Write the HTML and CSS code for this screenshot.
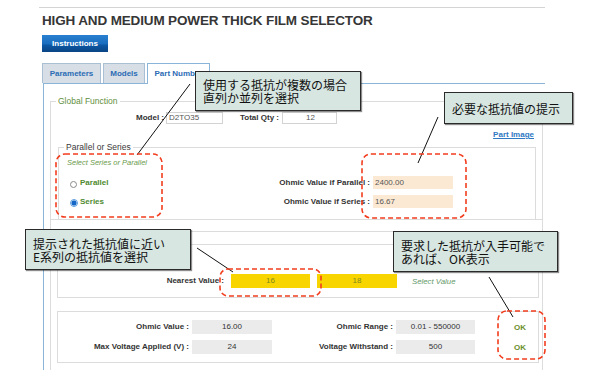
FILE: index.html
```html
<!DOCTYPE html>
<html lang="ja">
<head>
  <meta charset="UTF-8" />
  <meta name="viewport" content="width=device-width, initial-scale=1.0"/>
  <title>High and Medium Power Thick Film Selector</title>
  <link rel="stylesheet" href="styles.css">
</head>
<body>
  <div class="top-rule"></div>
  <h1 class="title">HIGH AND MEDIUM POWER THICK FILM SELECTOR</h1>
  <div class="btn-instr">Instructions</div>

  <div class="tabs">
    <div class="tab tab-params">Parameters</div>
    <div class="tab tab-models">Models</div>
    <div class="tab tab-part active">Part Number</div>
  </div>

  <div class="panel">
    <div class="form-wrap">
      <fieldset class="fs-global">
        <legend>Global Function</legend>
        <div class="row-model">
          <span class="lbl lbl-model">Model :</span>
          <div class="inp inp-model">D2TO35</div>
          <span class="lbl lbl-qty">Total Qty :</span>
          <div class="inp inp-qty">12</div>
        </div>
        <div class="row-link"><a class="part-link">Part Image</a></div>

        <fieldset class="fs-ps">
          <legend>Parallel or Series</legend>
          <div class="hint">Select Series or Parallel</div>
          <div class="ps-rows">
            <div class="ps-row">
              <div class="ps-choice"><span class="radio"></span><span class="choice-lbl">Parallel</span></div>
              <span class="lbl ps-lbl">Ohmic Value if Parallel :</span>
              <div class="val-peach">2400.00</div>
            </div>
            <div class="ps-row">
              <div class="ps-choice"><span class="radio on"></span><span class="choice-lbl">Series</span></div>
              <span class="lbl ps-lbl">Ohmic Value if Series :</span>
              <div class="val-peach">16.67</div>
            </div>
          </div>
        </fieldset>
      </fieldset>

      <div class="fs-result">
        <div class="box box-nearest">
          <span class="lbl nearest-lbl">Nearest Value :</span>
          <span class="pick">16</span>
          <span class="pick pick2">18</span>
          <span class="select-hint">Select Value</span>
        </div>
        <div class="box box-spec">
          <span class="lbl">Ohmic Value :</span>
          <span class="val-gray">16.00</span>
          <span class="lbl">Ohmic Range :</span>
          <span class="val-gray">0.01 - 550000</span>
          <span class="ok">OK</span>

          <span class="lbl">Max Voltage Applied (V) :</span>
          <span class="val-gray">24</span>
          <span class="lbl">Voltage Withstand :</span>
          <span class="val-gray">500</span>
          <span class="ok">OK</span>
        </div>
      </div>
    </div>
  </div>

  <!-- annotation layer -->
  <svg class="marks" width="600" height="370" viewBox="0 0 600 370">
    <g class="leaders">
      <line x1="190" y1="84" x2="137" y2="155"/>
      <line x1="438" y1="117" x2="418" y2="163"/>
      <line x1="197" y1="248" x2="233" y2="272"/>
      <line x1="489" y1="277" x2="513" y2="317"/>
    </g>
    <g class="zones">
      <rect x="56" y="154" width="106" height="63" rx="9"/>
      <rect x="362" y="154" width="104" height="64" rx="9"/>
      <rect x="220" y="269" width="101" height="27" rx="8"/>
      <rect x="498" y="311" width="47" height="48" rx="9"/>
    </g>
  </svg>

  <div class="callout c1">使用する抵抗が複数の場合<br>直列か並列を選択</div>
  <div class="callout c2">必要な抵抗値の提示</div>
  <div class="callout c3">提示された抵抗値に近い<br>E系列の抵抗値を選択</div>
  <div class="callout c4">要求した抵抗が入手可能で<br>あれば、OK表示</div>
</body>
</html>
```

FILE: styles.css
```css
* {
  box-sizing: border-box;
}

html, body {
  margin: 0;
  padding: 0;
  overflow: hidden;
  background: #fff;
}

body {
  position: relative;
  width: 600px;
  height: 370px;
  font-family: "Liberation Sans", Arial, sans-serif;
  color: #333;
}

.top-rule {
  margin: 7px 0 0 39px;
  width: 506px;
  height: 1px;
  background: #d4d4d4;
}

.title {
  margin: 5px 0 0 42px;
  font-size: 13.5px;
  line-height: 16px;
  font-weight: bold;
  letter-spacing: -0.15px;
  color: #363636;
}

.btn-instr {
  margin: 6px 0 0 42px;
  width: 66px;
  height: 17px;
  background: linear-gradient(to bottom, #2a80d0 0%, #1a6ebf 50%, #0c56a2 62%, #0a4584 100%);
  color: #fff;
  font-size: 8px;
  font-weight: bold;
  line-height: 17px;
  text-align: center;
}

/* tabs */
.tabs {
  display: flex;
  align-items: flex-start;
  gap: 2px;
  margin: 11px 0 0 42px;
  height: 20px;
}

.tab {
  height: 20px;
  border: 1px solid #a9bfd3;
  border-bottom: none;
  background: #d7dee5;
  color: #2b6cb5;
  font-size: 8px;
  font-weight: bold;
  line-height: 19px;
  text-align: center;
}

.tab-params { width: 59px; }
.tab-models { width: 42px; }
.tab-part { width: 63px; }

.tab.active {
  position: relative;
  z-index: 1;
  height: 21px;
  background: #fff;
  border-color: #8ab4d8;
}

.panel {
  margin-left: 43px;
  width: 502px;
  height: 287px;
  border-top: 1px solid #8ab4d8;
  border-left: 1px solid #8ab4d8;
}

.form-wrap {
  display: flow-root;
  margin: 17px 0 0 6px;
  width: 493px;
  height: 280px;
  border-left: 1px solid #dcdcdc;
  border-right: 1px solid #dcdcdc;
}

.lbl {
  font-size: 8px;
  font-weight: bold;
  line-height: 10px;
  color: #333;
  white-space: nowrap;
  text-align: right;
}

/* global function */
.fs-global {
  margin: -5px 0 0;
  padding: 0 6px 0 7px;
  min-width: 0;
  border: none;
  border-top: 1px solid #dcdcdc;
  border-bottom: 1px solid #dcdcdc;
}

.fs-global > legend {
  margin-left: -2px;
  padding: 0 2px;
  font-size: 8.5px;
  line-height: 10px;
  color: #5f8f3e;
}

.row-model {
  display: flex;
  align-items: center;
  height: 12px;
  margin-top: 6px;
}

.lbl-model { width: 106px; }

.inp {
  height: 12px;
  border: 1px solid #d3d3d3;
  font-size: 8px;
  line-height: 10px;
  color: #555;
  padding-left: 2px;
}

.inp-model {
  margin-left: 2px;
  width: 57px;
}

.lbl-qty { margin-left: 17px; }

.inp-qty {
  margin-left: 3px;
  width: 55px;
  text-align: center;
}

.row-link {
  margin-top: 6px;
  padding-right: 2px;
  height: 10px;
  font-size: 8px;
  line-height: 10px;
  text-align: right;
}

.part-link {
  font-weight: bold;
  color: #2f79c2;
  text-decoration: underline;
}

/* parallel or series */
.fs-ps {
  margin: 2px 0 -1px;
  padding: 0 0 11px 5px;
  min-width: 0;
  border: 1px solid #dcdcdc;
}

.fs-ps > legend {
  padding: 0 2px;
  font-size: 8.5px;
  line-height: 10px;
  color: #3a3a3a;
}

.hint {
  margin: 6px 0 0 3px;
  height: 10px;
  font-size: 7.5px;
  font-style: italic;
  line-height: 10px;
  color: #6b9a4b;
}

.ps-rows {
  margin-top: 8px;
  display: flex;
  flex-direction: column;
  gap: 6px;
}

.ps-row {
  display: flex;
  align-items: center;
  height: 13px;
}

.ps-choice {
  width: 186px;
  display: flex;
  align-items: center;
  padding-left: 6px;
}

.radio {
  width: 7px;
  height: 7px;
  margin-top: 3px;
  border-radius: 50%;
  border: 1px solid #8a8a8a;
  background: #fff;
}

.radio.on {
  width: 8px;
  height: 8px;
  border-color: #5d9ee0;
  background: radial-gradient(circle, #1668c8 0 2.2px, #cfe3f7 2.8px);
}

.choice-lbl {
  margin-left: 3px;
  font-size: 8px;
  font-weight: bold;
  line-height: 10px;
  color: #4f8a30;
}

.radio.on + .choice-lbl { margin-left: 2px; }

.ps-lbl { width: 120px; }

.val-peach {
  margin-left: 3px;
  width: 80px;
  height: 13px;
  padding-left: 2px;
  background: #fce9d3;
  font-size: 8px;
  line-height: 13px;
  color: #555;
}

/* result */
.fs-result {
  margin-top: 11px;
  padding: 12px 3px 0 6px;
  border-top: 1px solid #dcdcdc;
}

.box {
  border: 1px solid #dcdcdc;
}

.box-nearest {
  display: flex;
  align-items: center;
  padding: 29px 0 9px;
}

.nearest-lbl { width: 166px; }

.pick {
  margin-left: 7px;
  width: 79px;
  height: 14px;
  background: #f9d500;
  color: #7d8a1c;
  font-size: 8px;
  line-height: 14px;
  text-align: center;
}

.pick2 { width: 80px; }

.select-hint {
  margin-left: 15px;
  font-size: 7.8px;
  font-style: italic;
  color: #5f9868;
}

.box-spec {
  margin-top: 13px;
  display: grid;
  grid-template-columns: 131px 80px 118px 79px 1fr;
  grid-auto-rows: 14px;
  column-gap: 3px;
  row-gap: 6px;
  align-items: center;
  padding: 8px 0;
}

.val-gray {
  height: 14px;
  background: #ebebeb;
  font-size: 8px;
  line-height: 14px;
  text-align: center;
  color: #333;
}

.ok {
  padding-left: 36px;
  font-size: 8px;
  font-weight: bold;
  color: #6a8f2a;
}

/* annotations */
.marks {
  position: absolute;
  left: 0;
  top: 0;
  z-index: 2;
  pointer-events: none;
}

.leaders line {
  stroke: #111;
  stroke-width: 1;
}

.zones rect {
  fill: none;
  stroke: #f23d1e;
  stroke-width: 1.6;
  stroke-dasharray: 5 3;
}

.callout {
  position: absolute;
  z-index: 3;
  display: flex;
  align-items: center;
  padding: 0 7px;
  background: #d7e6e1;
  border: 1px solid #2a2a2a;
  box-shadow: 1px 1px 1px rgba(0, 0, 0, 0.45);
  font-family: "Noto Sans CJK JP", "Liberation Sans", sans-serif;
  font-size: 12px;
  line-height: 13px;
  color: #111;
}

.c1 { left: 195px; top: 71px; width: 166px; height: 40px; }
.c2 { left: 444px; top: 92px; width: 129px; height: 32px; }
.c3 { left: 25px; top: 229px; width: 166px; height: 41px; }
.c4 { left: 393px; top: 231px; width: 165px; height: 41px; }
```
